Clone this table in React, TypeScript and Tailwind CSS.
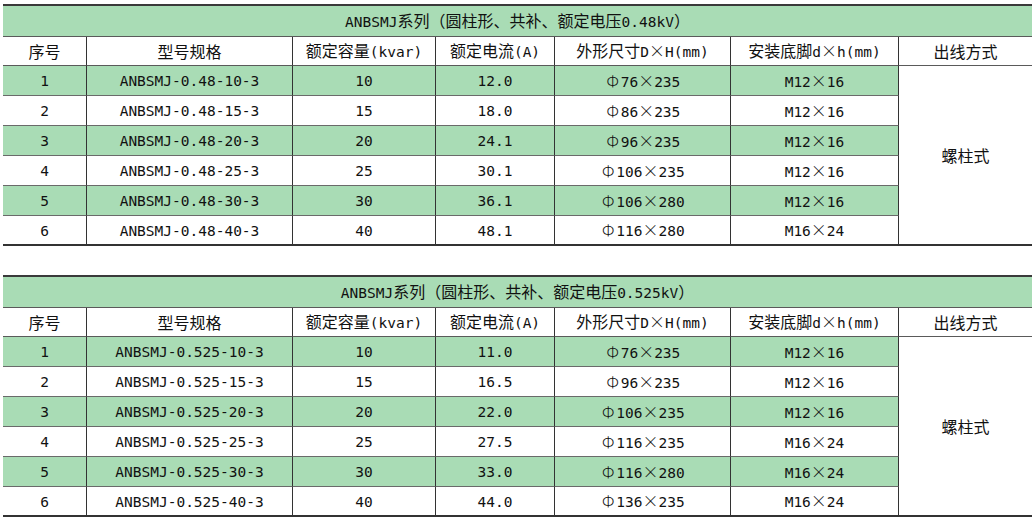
import React from "react";

type Row = [string, string, string, string, string, string];

const t1: Row[] = [
  ["1", "ANBSMJ-0.48-10-3", "10", "12.0", "Φ76×235", "M12×16"],
  ["2", "ANBSMJ-0.48-15-3", "15", "18.0", "Φ86×235", "M12×16"],
  ["3", "ANBSMJ-0.48-20-3", "20", "24.1", "Φ96×235", "M12×16"],
  ["4", "ANBSMJ-0.48-25-3", "25", "30.1", "Φ106×235", "M12×16"],
  ["5", "ANBSMJ-0.48-30-3", "30", "36.1", "Φ106×280", "M12×16"],
  ["6", "ANBSMJ-0.48-40-3", "40", "48.1", "Φ116×280", "M16×24"],
];

const t2: Row[] = [
  ["1", "ANBSMJ-0.525-10-3", "10", "11.0", "Φ76×235", "M12×16"],
  ["2", "ANBSMJ-0.525-15-3", "15", "16.5", "Φ96×235", "M12×16"],
  ["3", "ANBSMJ-0.525-20-3", "20", "22.0", "Φ106×235", "M12×16"],
  ["4", "ANBSMJ-0.525-25-3", "25", "27.5", "Φ116×235", "M16×24"],
  ["5", "ANBSMJ-0.525-30-3", "30", "33.0", "Φ116×280", "M16×24"],
  ["6", "ANBSMJ-0.525-40-3", "40", "44.0", "Φ136×235", "M16×24"],
];

const headers = ["序号", "型号规格", "额定容量(kvar)", "额定电流(A)", "外形尺寸D×H(mm)", "安装底脚d×h(mm)", "出线方式"];

const isCJK = (c: string) => /[\u2E80-\u9FFF\u3000-\u303F\uFF00-\uFFEF]/.test(c);
const isSpecial = (c: string) => c === "×" || c === "Φ";

function T({ s }: { s: string }) {
  const runs: { kind: "c" | "l" | "s"; text: string }[] = [];
  for (const ch of Array.from(s)) {
    const kind = isSpecial(ch) ? "s" : isCJK(ch) ? "c" : "l";
    const last = runs[runs.length - 1];
    if (last && last.kind === kind && kind !== "s") last.text += ch;
    else runs.push({ kind, text: ch });
  }
  return (
    <span className="whitespace-nowrap">
      {runs.map((r, i) =>
        r.kind === "c" ? (
          <span key={i} className="font-['Noto_Sans_CJK_SC',sans-serif] text-[16px]">
            {r.text}
          </span>
        ) : r.kind === "s" ? (
          <span
            key={i}
            className="inline-block w-[16px] text-center font-['Noto_Sans_CJK_SC',sans-serif] text-[16px] font-light"
          >
            {r.text}
          </span>
        ) : (
          <span key={i} className="font-['DejaVu_Sans_Mono',monospace] text-[14.5px]">
            {r.text}
          </span>
        )
      )}
    </span>
  );
}

function Table({ title, rows }: { title: string; rows: Row[] }) {
  return (
    <div className="w-[1029px] border-t-2 border-[#3a3a3a] grid grid-cols-[84px_206px_143px_119px_176px_168px_133px] text-[#111]">
      <div className="col-span-7 h-[31px] bg-[#a9dcb5] border-b border-[#5a5a5a] flex items-center justify-center">
        <T s={title} />
      </div>
      {headers.map((h, i) => (
        <div
          key={h}
          className={
            "h-[29px] bg-white border-b border-[#5a5a5a] flex items-center justify-center " +
            (i < 6 ? "border-r border-r-[#333]" : "")
          }
        >
          <T s={h} />
        </div>
      ))}
      {rows.map((r, ri) => (
        <React.Fragment key={ri}>
          {r.map((c, ci) => (
            <div
              key={ci}
              className={
                "h-[30px] flex items-center justify-center border-r border-r-[#333] " +
                (ri % 2 === 0 ? "bg-[#a9dcb5] " : "bg-white ") +
                (ri === 5 ? "border-b-2 border-b-[#333]" : "border-b border-b-[#6a6a6a]")
              }
            >
              <T s={c} />
            </div>
          ))}
          {ri === 0 && (
            <div className="row-span-6 bg-white border-b-2 border-b-[#333] flex items-center justify-center">
              <T s="螺柱式" />
            </div>
          )}
        </React.Fragment>
      ))}
    </div>
  );
}

export default function App() {
  return (
    <div className="w-[1035px] h-[522px] bg-white pt-[4px] pl-[3px] flex flex-col gap-[29px] overflow-hidden">
      <Table title="ANBSMJ系列（圆柱形、共补、额定电压0.48kV）" rows={t1} />
      <Table title="ANBSMJ系列（圆柱形、共补、额定电压0.525kV）" rows={t2} />
    </div>
  );
}
